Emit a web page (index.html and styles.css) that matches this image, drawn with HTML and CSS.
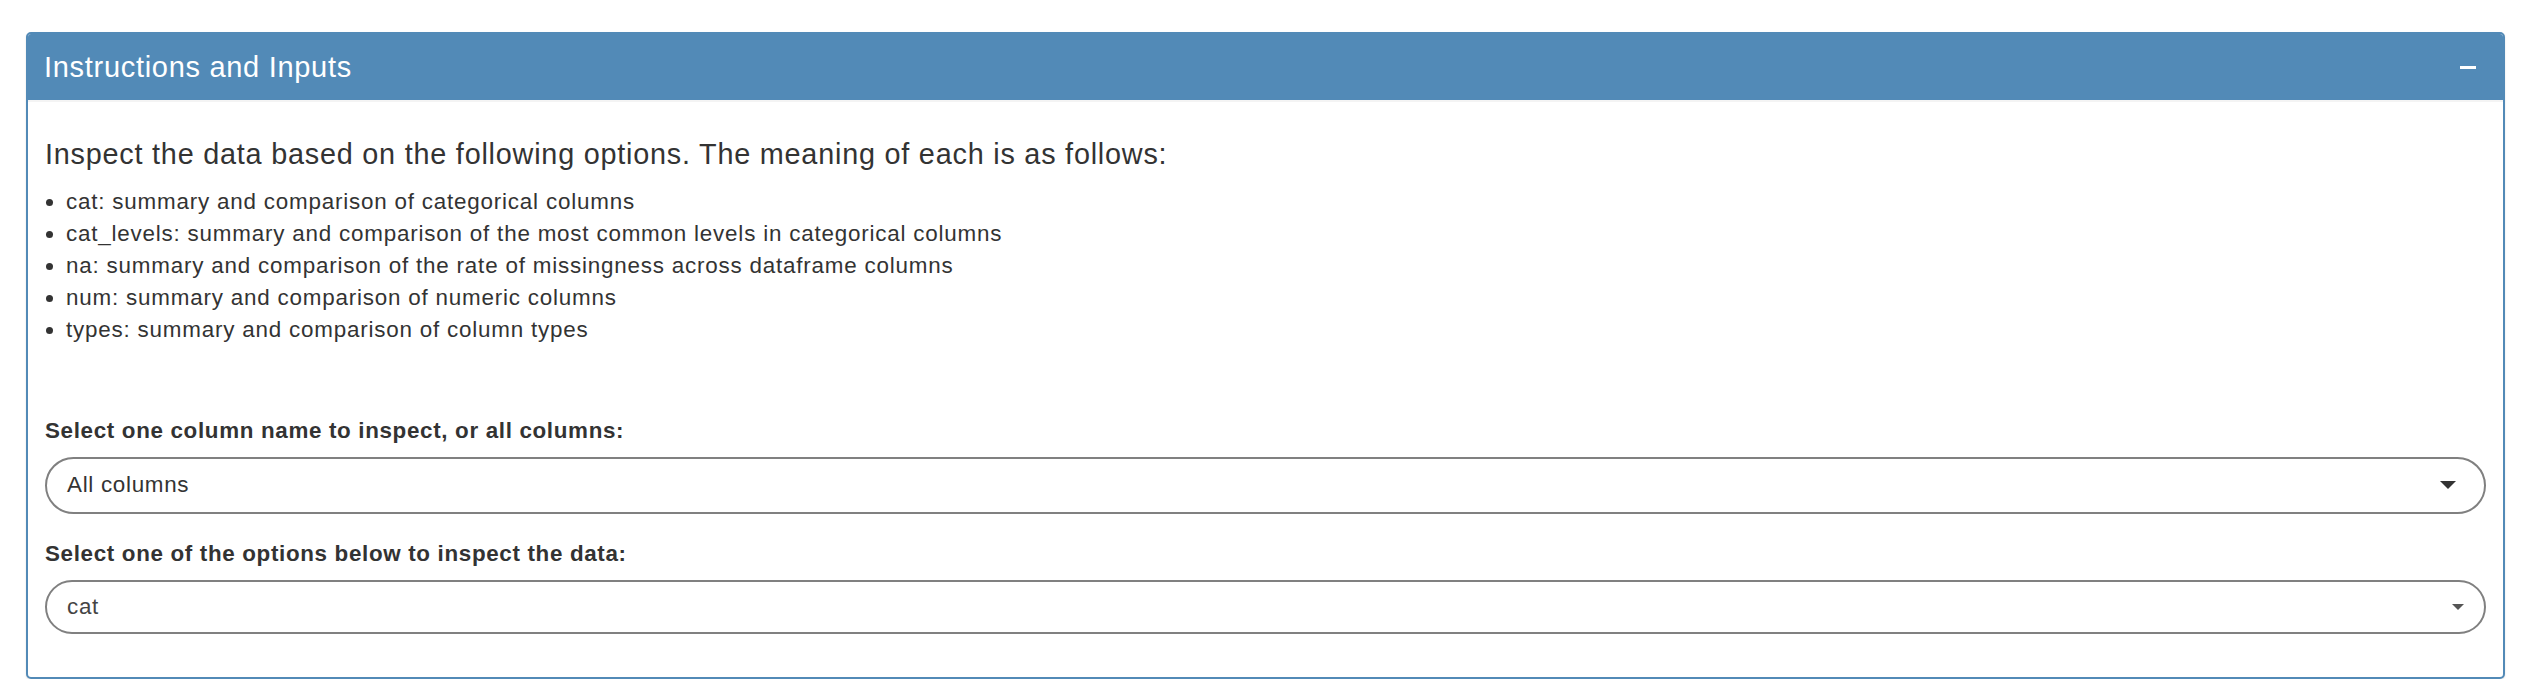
FILE: index.html
```html
<!DOCTYPE html>
<html lang="en">
<head>
<meta charset="utf-8">
<title>Instructions and Inputs</title>
<link rel="stylesheet" href="styles.css">
</head>
<body>
<div class="page">
  <section class="box">
    <header class="box-header">
      <h3 class="box-title">Instructions and Inputs</h3>
      <button class="btn-tool" type="button" aria-label="Collapse"><span class="minus"></span></button>
    </header>
    <div class="box-body">
      <h4 class="intro">Inspect the data based on the following options. The meaning of each is as follows:</h4>
      <ul class="opts">
        <li>cat: summary and comparison of categorical columns</li>
        <li>cat_levels: summary and comparison of the most common levels in categorical columns</li>
        <li>na: summary and comparison of the rate of missingness across dataframe columns</li>
        <li>num: summary and comparison of numeric columns</li>
        <li>types: summary and comparison of column types</li>
      </ul>
      <div class="form-group first">
        <label class="label">Select one column name to inspect, or all columns:</label>
        <div class="select select-lg">
          <span class="value">All columns</span>
          <span class="caret caret-lg"></span>
        </div>
      </div>
      <div class="form-group">
        <label class="label">Select one of the options below to inspect the data:</label>
        <div class="select select-sm">
          <span class="value muted">cat</span>
          <span class="caret caret-sm"></span>
        </div>
      </div>
    </div>
  </section>
</div>
</body>
</html>
```
FILE: styles.css
```css
* { box-sizing: border-box; }
html, body { margin: 0; padding: 0; background: #fff; }
body {
  font-family: "Liberation Sans", Arial, Helvetica, sans-serif;
  font-size: 22.4px;
  line-height: 32px;
  color: #333;
}
.page { padding: 32px 23px 0 26px; }

.box {
  border: 2px solid #528ab7;
  border-radius: 5px;
  background: #fff;
  box-shadow: 0 1px 2px rgba(0,0,0,0.12);
  overflow: hidden;
}
.box-header {
  background: #528ab7;
  height: 68px;
  padding: 0 27px 0 16px;
  display: flex;
  align-items: center;
  justify-content: space-between;
  border-bottom: 2px solid #f4f4f4;
}
.box-title {
  margin: 0;
  color: #fff;
  font-weight: normal;
  font-size: 29px;
  line-height: 1;
  letter-spacing: 0.7px;
}
.btn-tool {
  background: none;
  border: 0;
  padding: 0;
  width: 16px;
  height: 16px;
  display: flex;
  align-items: center;
  cursor: pointer;
}
.minus {
  display: block;
  width: 16px;
  height: 3px;
  background: #fff;
}

.box-body { padding: 16px 17px 19px 17px; }
.intro {
  margin: 21px 0 15px 0;
  font-size: 28.8px;
  font-weight: normal;
  line-height: 1.1;
  letter-spacing: 0.78px;
}
.opts {
  margin: 0;
  padding-left: 21px;
  letter-spacing: 0.8px;
}
.form-group { margin-bottom: 24px; }
.form-group.first { margin-top: 69px; }
.label {
  display: block;
  font-weight: bold;
  margin-bottom: 10px;
  letter-spacing: 0.66px;
}
.select {
  display: flex;
  align-items: center;
  justify-content: space-between;
  border: 2px solid #808080;
  border-radius: 30px;
  padding: 0 28px 0 20px;
  letter-spacing: 0.7px;
}
.select-lg { height: 57px; }
.select-sm { height: 54px; padding-right: 20px; }
.value { color: #333; }
.value.muted { color: #444; }
.caret {
  width: 0;
  height: 0;
  border-left-style: solid;
  border-right-style: solid;
  border-top-style: solid;
  border-left-color: transparent;
  border-right-color: transparent;
}
.caret-lg {
  border-width: 8px 8px 0 8px;
  border-top-color: #333;
}
.caret-sm {
  border-width: 6px 6px 0 6px;
  border-top-color: #555;
}
```
